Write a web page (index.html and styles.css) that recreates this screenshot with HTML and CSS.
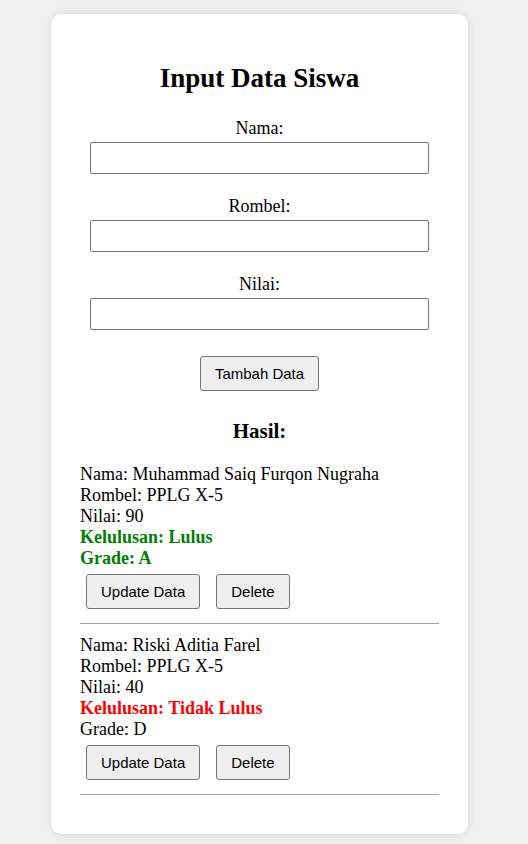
FILE: index.html
```html
<!DOCTYPE html>
<html lang="id">
<head>
<meta charset="utf-8">
<title>Input Data Siswa</title>
<link rel="stylesheet" href="styles.css">
</head>
<body>
<div class="card">
  <h2 class="title">Input Data Siswa</h2>
  <div class="field">
    <label class="label">Nama:</label>
    <input class="input" type="text">
  </div>
  <div class="field">
    <label class="label">Rombel:</label>
    <input class="input" type="text">
  </div>
  <div class="field">
    <label class="label">Nilai:</label>
    <input class="input" type="text">
  </div>
  <div class="submit-row">
    <button class="btn">Tambah Data</button>
  </div>
  <h3 class="subtitle">Hasil:</h3>
  <div class="item">
    <div class="line">Nama: Muhammad Saiq Furqon Nugraha</div>
    <div class="line">Rombel: PPLG X-5</div>
    <div class="line">Nilai: 90</div>
    <div class="line pass">Kelulusan: Lulus</div>
    <div class="line pass">Grade: A</div>
    <div class="actions">
      <button class="btn">Update Data</button>
      <button class="btn">Delete</button>
    </div>
  </div>
  <div class="item">
    <div class="line">Nama: Riski Aditia Farel</div>
    <div class="line">Rombel: PPLG X-5</div>
    <div class="line">Nilai: 40</div>
    <div class="line fail">Kelulusan: Tidak Lulus</div>
    <div class="line">Grade: D</div>
    <div class="actions">
      <button class="btn">Update Data</button>
      <button class="btn">Delete</button>
    </div>
  </div>
</div>
</body>
</html>
```
FILE: styles.css
```css
html, body {
  margin: 0;
  padding: 0;
}
body {
  background: #f0f0f0;
  font-family: "Liberation Serif", "Times New Roman", serif;
  font-size: 18px;
  color: #000;
  padding: 14px 0 11px 0;
}
.card {
  box-sizing: border-box;
  width: 417px;
  margin-left: 51px;
  background: #fff;
  border-radius: 10px;
  box-shadow: 0 0 10px rgba(0, 0, 0, 0.1);
  padding: 49px 29px 39px 29px;
}
.title {
  margin: 0;
  font-size: 27px;
  line-height: 31px;
  font-weight: bold;
  text-align: center;
}
.field {
  display: flex;
  flex-direction: column;
  align-items: center;
  margin-top: 24px;
}
.field + .field {
  margin-top: 22px;
}
.label {
  line-height: 21px;
  height: 21px;
}
.input {
  box-sizing: border-box;
  width: 339px;
  height: 32px;
  margin-top: 3px;
  border: 1px solid #767676;
  border-radius: 2px;
  background: #fff;
  padding: 0 8px;
  font-size: 15px;
}
.submit-row {
  display: flex;
  justify-content: center;
  margin-top: 26px;
}
.btn {
  box-sizing: border-box;
  height: 35px;
  padding: 0 14px;
  border: 1px solid #767676;
  border-radius: 3px;
  background: #efefef;
  font-family: "Liberation Sans", Arial, sans-serif;
  font-size: 15px;
  color: #000;
}
.subtitle {
  margin: 28px 0 21px 0;
  font-size: 21px;
  line-height: 24px;
  font-weight: bold;
  text-align: center;
}
.item {
  border-bottom: 1px solid #a0a0a0;
  padding-bottom: 14px;
}
.item + .item {
  padding-top: 11px;
}
.line {
  line-height: 21px;
}
.pass {
  color: #008000;
  font-weight: bold;
}
.fail {
  color: #ff0000;
  font-weight: bold;
}
.actions {
  display: flex;
  gap: 16px;
  margin-top: 5px;
  padding-left: 6px;
}
```
